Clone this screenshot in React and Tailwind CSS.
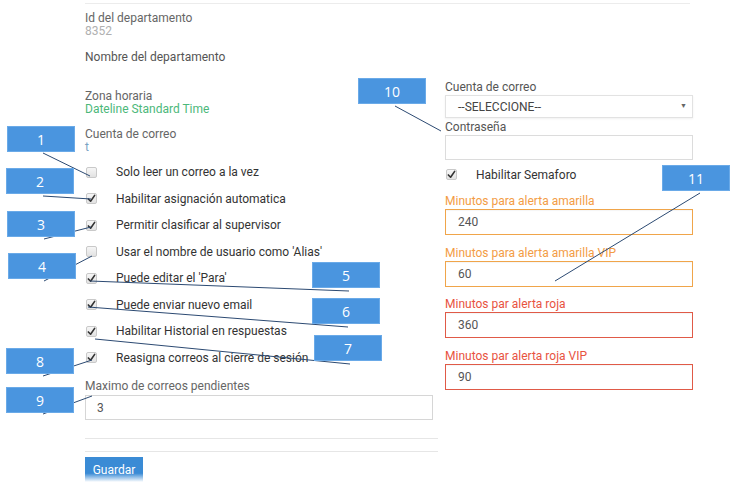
import React from "react";

// Casilla de verificación dibujada (gris, como en la captura)
function Check({ checked }) {
  return (
    <span className="flex h-[11px] w-[11px] items-center justify-center rounded-[2px] border border-[#c9c9c9] bg-[linear-gradient(180deg,#f6f6f6,#e2e2e2)]">
      {checked && (
        <svg width="9" height="9" viewBox="0 0 10 10">
          <path d="M1.5 5.5 L4 8 L8.5 1.5" fill="none" stroke="#333" strokeWidth="1.8" strokeLinecap="round" strokeLinejoin="round" />
        </svg>
      )}
    </span>
  );
}

function CheckRow({ label, checked }) {
  return (
    <div className="flex h-[26.5px] items-center">
      <div className="w-[31px] pl-[1px]">
        <Check checked={checked} />
      </div>
      <span className="text-[12px] text-[#333]">{label}</span>
    </div>
  );
}

function AlertField({ label, value, tone, className }) {
  const red = tone === "red";
  return (
    <div className={className}>
      <div className={red ? "text-[12px] leading-[13px] text-[#e8533f]" : "text-[12px] leading-[13px] text-[#f39c45]"}>{label}</div>
      <div
        className={
          red
            ? "mt-[1px] flex h-[26px] items-center border border-[#e05a47] pl-[12px] text-[12px] text-[#555] shadow-[inset_0_1px_1px_rgba(0,0,0,0.04)]"
            : "mt-[1px] flex h-[26px] items-center border border-[#f0a54a] pl-[12px] text-[12px] text-[#555] shadow-[inset_0_1px_1px_rgba(0,0,0,0.04)]"
        }
      >
        {value}
      </div>
    </div>
  );
}

const callouts = [
  { n: "1", x: 7, y: 126 },
  { n: "2", x: 6, y: 168 },
  { n: "3", x: 7, y: 211 },
  { n: "4", x: 8, y: 253 },
  { n: "5", x: 312, y: 262 },
  { n: "6", x: 312, y: 298 },
  { n: "7", x: 314, y: 335 },
  { n: "8", x: 6, y: 348 },
  { n: "9", x: 6, y: 387 },
  { n: "10", x: 358, y: 78 },
  { n: "11", x: 662, y: 165 },
];

const lines = [
  [43, 153, 90, 176],
  [43, 196, 91, 199],
  [44, 239, 91, 227],
  [44, 281, 92, 256],
  [90, 281, 349, 291],
  [88, 307, 348, 327],
  [95, 339, 350, 364],
  [43, 376, 92, 360],
  [43, 414, 92, 396],
  [395, 106, 441, 131],
  [700, 193, 555, 281],
];

export default function App() {
  return (
    <div className="relative h-[486px] w-[740px] overflow-hidden bg-white font-['Roboto','Liberation_Sans',sans-serif]">
      <div className="pl-[85px] pt-[3px]">
        <div className="h-px w-[605px] bg-[#ececec]" />
        <div className="flex">
          {/* Columna izquierda */}
          <div className="w-[353px]">
            <div className="mt-[8px] text-[12px] leading-[13px] text-[#666]">Id del departamento</div>
            <div className="text-[12px] leading-[13px] text-[#b0b0b0]">8352</div>
            <div className="mt-[13px] text-[12px] leading-[13px] text-[#555]">Nombre del departamento</div>
            <div className="mt-[26px] text-[12px] leading-[13px] text-[#666]">Zona horaria</div>
            <div className="text-[12px] leading-[13px] text-[#4cb87a]">Dateline Standard Time</div>
            <div className="mt-[12px] text-[12px] leading-[13px] text-[#666]">Cuenta de correo</div>
            <div className="text-[12px] leading-[13px] text-[#7aa3c4]">t</div>
            <div className="mt-[5px]">
              <CheckRow label="Solo leer un correo a la vez" />
              <CheckRow label="Habilitar asignación automatica" checked />
              <CheckRow label="Permitir clasificar al supervisor" checked />
              <CheckRow label="Usar el nombre de usuario como 'Alias'" />
              <CheckRow label="Puede editar el 'Para'" checked />
              <CheckRow label="Puede enviar nuevo email" checked />
              <CheckRow label="Habilitar Historial en respuestas" checked />
              <CheckRow label="Reasigna correos al cierre de sesión" checked />
            </div>
            <div className="mt-[9px] text-[12px] leading-[13px] text-[#666]">Maximo de correos pendientes</div>
            <div className="mt-[2px] flex h-[25px] w-[348px] items-center border border-[#d6d6d6] pl-[11px] text-[12px] text-[#555]">3</div>
            <div className="mt-[18px] h-px w-[353px] bg-[#e6e6e6]" />
            <div className="mt-[12px] h-px w-[353px] bg-[#e6e6e6]" />
            <button className="mt-[5px] flex h-[25px] w-[58px] items-center justify-center bg-[linear-gradient(180deg,#3a8bd5_0%,#3a8bd5_65%,#ffffff_100%)] text-[12px] text-white">
              Guardar
            </button>
          </div>

          {/* Columna derecha */}
          <div className="ml-[7px] w-[248px]">
            <div className="mt-[77px] text-[12px] leading-[13px] text-[#555]">Cuenta de correo</div>
            <div className="mt-[1px] flex h-[23px] items-center justify-between border border-[#e2e2e2] pl-[12px] pr-[5px] text-[12px] text-[#444] shadow-[0_1px_2px_rgba(0,0,0,0.06)]">
              <span>--SELECCIONE--</span>
              <span className="text-[7px] text-[#666]">▼</span>
            </div>
            <div className="mt-[2.5px] text-[12px] leading-[13px] text-[#555]">Contraseña</div>
            <div className="mt-px h-[25px] border border-[#dcdcdc]" />
            <div className="mt-[2px] flex h-[26px] items-center">
              <div className="w-[31px] pl-[1px]">
                <Check checked />
              </div>
              <span className="text-[12px] text-[#333]">Habilitar Semaforo</span>
            </div>
            <AlertField className="mt-[7px]" label="Minutos para alerta amarilla" value="240" />
            <AlertField className="mt-[12px]" label="Minutos para alerta amarilla VIP" value="60" />
            <AlertField className="mt-[11.5px]" label="Minutos par alerta roja" value="360" tone="red" />
            <AlertField className="mt-[11.5px]" label="Minutos par alerta roja VIP" value="90" tone="red" />
          </div>
        </div>
      </div>

      {/* Líneas de las anotaciones */}
      <svg className="pointer-events-none absolute left-0 top-0" width="740" height="486">
        {lines.map(([x1, y1, x2, y2], i) => (
          <line key={i} x1={x1} y1={y1} x2={x2} y2={y2} stroke="#2c4a72" strokeWidth="1" />
        ))}
      </svg>

      {/* Recuadros numerados */}
      {callouts.map((c) => (
        <div
          key={c.n}
          className="absolute flex h-[26px] w-[68px] items-center justify-center border border-[#6aaae8] bg-[#4a95df] font-['Open_Sans',sans-serif] text-[14px] text-white"
          style={{ left: c.x, top: c.y }}
        >
          {c.n}
        </div>
      ))}
    </div>
  );
}
